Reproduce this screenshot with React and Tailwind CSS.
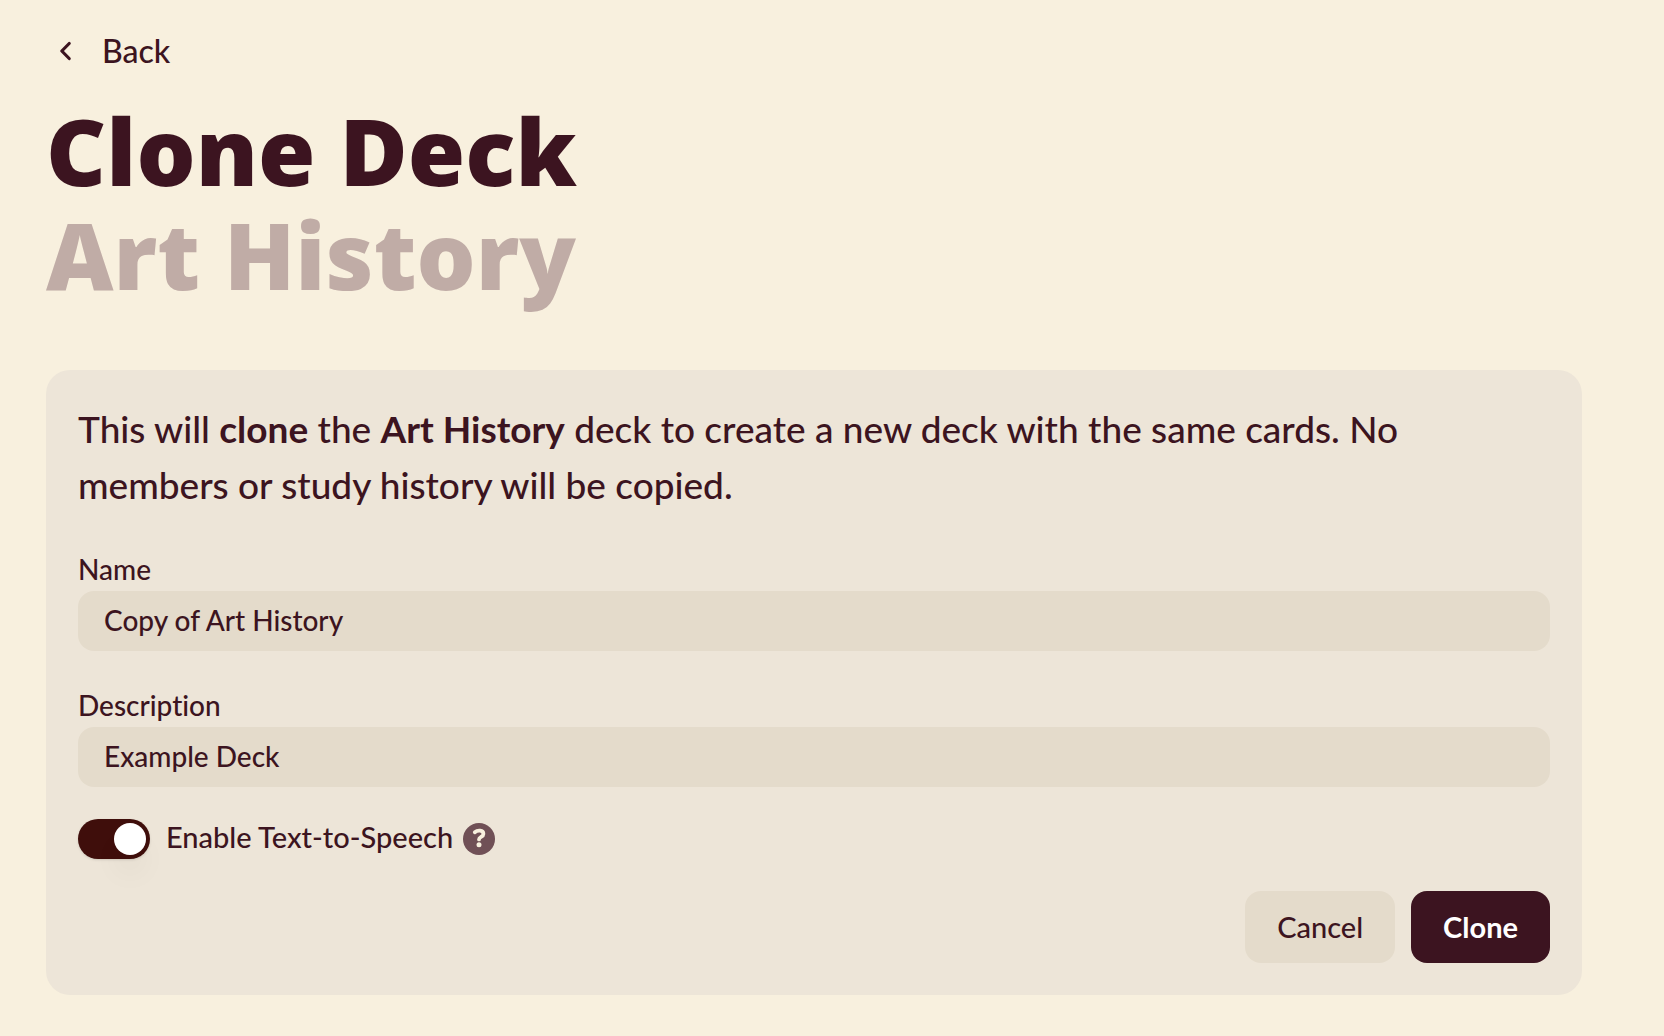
import { useState } from "react";

function Field({ id, label, value }) {
  return (
    <div className="flex flex-col">
      <label htmlFor={id} className="pb-1 text-[28px] leading-9 font-medium">
        {label}
      </label>
      <input
        id={id}
        type="text"
        defaultValue={value}
        className="h-15 w-full rounded-2xl bg-[#e4dbcb] px-[26px] pb-0.5 text-[28px] font-medium outline-none"
      />
    </div>
  );
}

function Toggle({ id, checked, onChange }) {
  return (
    <span className="relative inline-flex h-10 w-18 shrink-0">
      <input
        id={id}
        type="checkbox"
        role="switch"
        checked={checked}
        onChange={onChange}
        className="peer h-10 w-18 cursor-pointer appearance-none rounded-full bg-[#cbbfb0] shadow-sm checked:bg-[#3f0e0b]"
      />
      <span className="pointer-events-none absolute top-1 left-1 size-8 rounded-full bg-white shadow-[0_20px_28px_rgba(60,40,20,0.04)] peer-checked:left-9" />
    </span>
  );
}

export default function App() {
  const [speech, setSpeech] = useState(true);
  return (
    <main className="min-h-screen bg-[#f8f0de] pt-6 pr-[82px] pb-10 pl-[46px] font-['Lato','Noto_Sans',sans-serif] text-[#3c1420] [font-variant-ligatures:none]">
      <button type="button" className="flex h-[54px] items-center gap-[26px] pl-3 text-[32px] font-medium">
        <svg viewBox="0 0 18 24" className="h-6 w-[18px]" fill="none" stroke="currentColor" strokeWidth="3.2" strokeLinecap="round" strokeLinejoin="round" aria-hidden="true">
          <path d="M11.2 4.500 3.800 12l7.400 7.500" />
        </svg>
        Back
      </button>

      <h1 className="mt-5 font-['Open_Sans','Lato',sans-serif] text-[93px] leading-[104px] font-extrabold">
        Clone Deck
        <span className="block text-[#c0aca6]">Art History</span>
      </h1>

      <form className="mt-16 rounded-3xl bg-[#ede5d8] px-8 pt-[31px] pb-8" onSubmit={(e) => e.preventDefault()}>
        <p className="text-[37px] leading-14 font-medium">
          This will <strong className="font-bold">clone</strong> the <strong className="font-bold">Art History</strong> deck to create a new deck with the same cards. No members or study history will be copied.
        </p>
        <div className="mt-[38px] flex flex-col gap-9">
          <Field id="name" label="Name" value="Copy of Art History" />
          <Field id="description" label="Description" value="Example Deck" />
        </div>
        <div className="mt-8 flex items-center">
          <Toggle id="speech" checked={speech} onChange={(e) => setSpeech(e.target.checked)} />
          <label htmlFor="speech" className="ml-4 pb-1 text-[29px] leading-9 font-medium">
            Enable Text-to-Speech
          </label>
          <button type="button" aria-label="About Text-to-Speech" className="ml-2.5 size-8">
            <svg viewBox="0 0 32 32" className="size-8" fill="none" aria-hidden="true">
              <circle cx="16" cy="16" r="16" fill="#705056" />
              <path d="M11.800 9.200C14.500 7 20.400 6.900 20.400 10.900c0 3.200-4.400 2.700-4.400 5.500" stroke="#f8f0de" strokeWidth="3.800" strokeLinecap="round" strokeLinejoin="round" />
              <circle cx="16" cy="21.800" r="2.500" fill="#f8f0de" />
            </svg>
          </button>
        </div>
        <div className="mt-8 flex justify-end gap-4 text-[29px]">
          <button type="button" className="h-18 rounded-2xl bg-[#e4dbcb] px-8 font-medium">
            Cancel
          </button>
          <button type="submit" className="h-18 rounded-2xl bg-[#3c1420] px-8 font-bold text-white">
            Clone
          </button>
        </div>
      </form>
    </main>
  );
}
